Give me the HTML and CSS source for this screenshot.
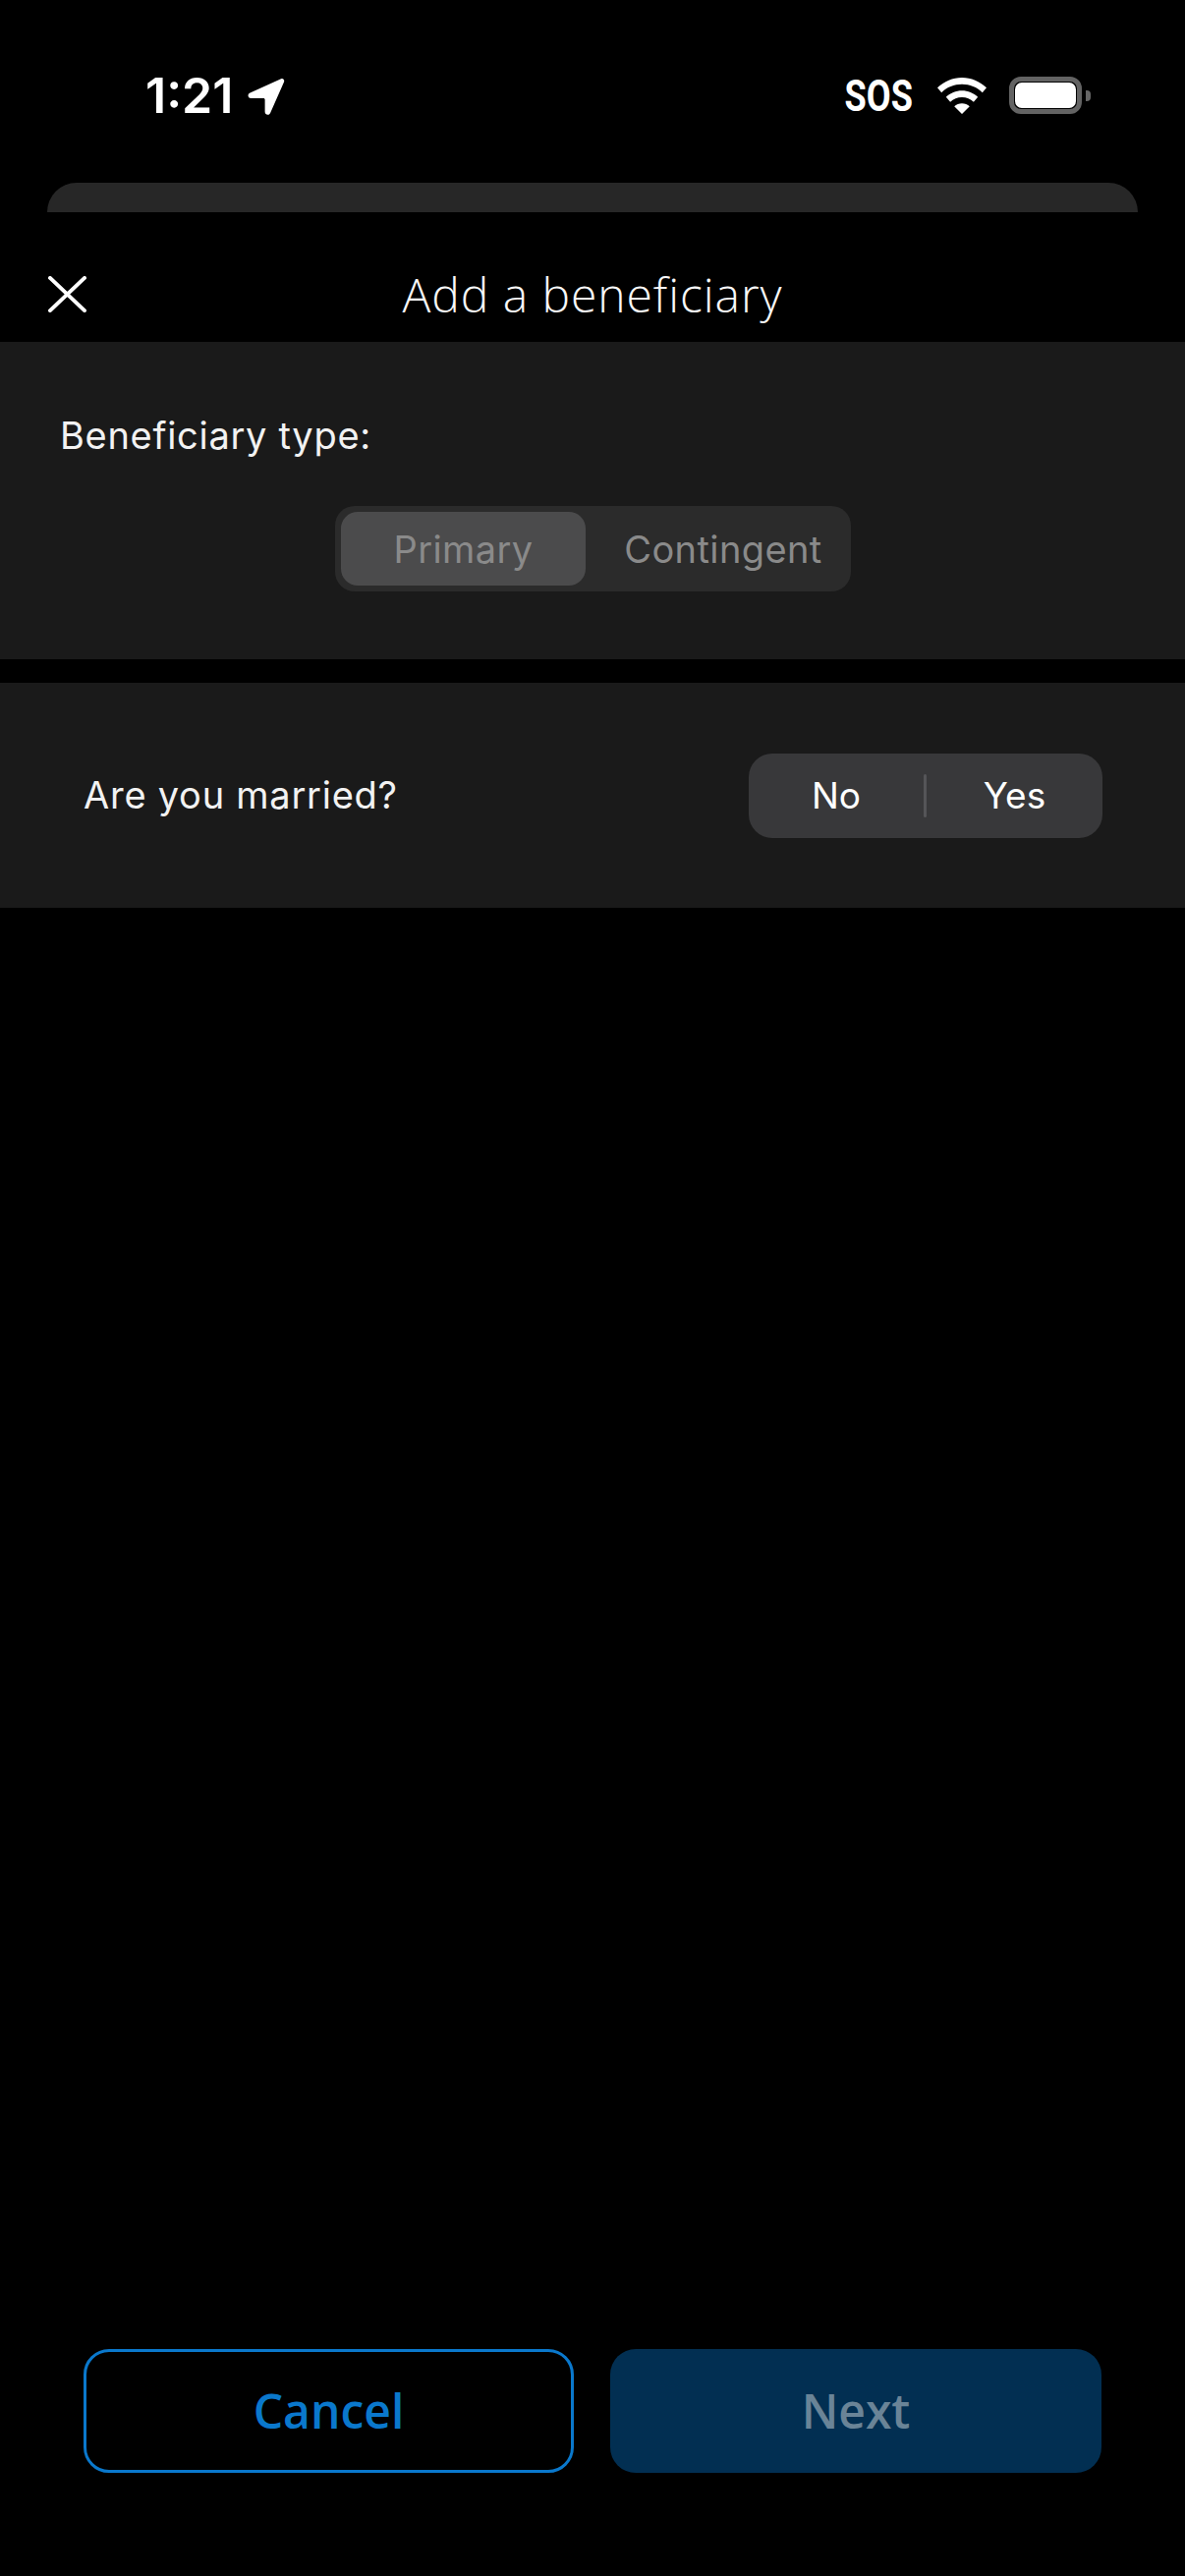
FILE: index.html
```html
<!DOCTYPE html>
<html lang="en">
<head>
<meta charset="utf-8">
<title>Add a beneficiary</title>
<link rel="stylesheet" href="styles.css">
</head>
<body>
<div class="screen">
  <div class="status">
    <div class="status-left">
      <span class="time">1:21</span>
      <svg class="loc" viewBox="0 0 39 39"><path d="M35 1.2 3.500 15.600c-3.200 1.500-2.200 5.500 1 5.500h12.600c.9 0 1.500.6 1.500 1.500v12.200c0 3.400 4.200 4.200 5.500 1.200L38 4.500c.9-2.200-.9-4.200-3-3.300Z" fill="#fff"/></svg>
    </div>
    <div class="status-right">
      <span class="sos"><span class="sos-text">SOS</span></span>
      <svg class="wifi" viewBox="0 0 50 37"><path d="M25 0C15.500 0 7 3.800 0 10.200l4.200 5C9.800 9.800 17 6.800 25 6.800s15.200 3 20.800 8.400l4.200-5C43 3.800 34.500 0 25 0Z M25 13.200c-6.200 0-11.800 2.500-16.200 6.500l4.300 5c3.200-3 7.300-4.700 11.900-4.700s8.700 1.700 11.900 4.700l4.300-5c-4.400-4-10-6.500-16.200-6.500Z M25 26.200c-3 0-5.700 1.200-7.800 3.100L25 37l7.800-7.700c-2.100-1.900-4.800-3.100-7.800-3.100Z" fill="#fff"/></svg>
      <span class="battery"><span class="battery-level"></span></span>
      <span class="battery-cap"></span>
    </div>
  </div>
  <div class="peek"></div>
  <header class="header">
    <svg class="close" viewBox="0 0 40 38"><path d="M2 2 38 36M38 2 2 36" stroke="#fff" stroke-width="4" stroke-linecap="round" fill="none"/></svg>
    <h1 class="title">Add a beneficiary</h1>
  </header>
  <section class="panel panel-type">
    <p class="label">Beneficiary type:</p>
    <div class="segment">
      <span class="seg-item seg-active">Primary</span>
      <span class="seg-item seg-plain">Contingent</span>
    </div>
  </section>
  <section class="panel panel-married">
    <p class="question">Are you married?</p>
    <div class="choice">
      <span class="choice-item">No</span>
      <span class="choice-divider"></span>
      <span class="choice-item">Yes</span>
    </div>
  </section>
  <div class="spacer"></div>
  <footer class="footer">
    <button class="btn btn-cancel">Cancel</button>
    <button class="btn btn-next">Next</button>
  </footer>
</div>
</body>
</html>
```
FILE: styles.css
```css
* { box-sizing: border-box; }
html, body { margin: 0; padding: 0; background: #000; }
.screen { width: 1206px; height: 2622px; display: flex; flex-direction: column; background: #000; color: #fff; overflow: hidden; }

.status { height: 186px; display: flex; justify-content: space-between; align-items: flex-start; padding: 0 96px 0 148px; }
.status-left { display: flex; align-items: flex-start; padding-top: 79px; gap: 14px; }
.time { font: 600 50px/37px Inter, sans-serif; }
.loc { width: 39px; height: 39px; display: block; }
.status-right { display: flex; align-items: flex-start; padding-top: 78px; }
.sos { width: 66px; height: 38px; margin-right: 27px; display: flex; justify-content: center; }
.sos-text { font: 700 44px/40px Roboto, sans-serif; transform: scaleX(.82); }
.wifi { width: 50px; height: 37px; margin-top: 1px; margin-right: 23px; display: block; }
.battery { width: 74px; height: 38px; border: 5px solid #636363; border-radius: 12px; display: block; }
.battery-level { display: block; margin: 1px; height: 26px; width: 62px; background: #fff; border-radius: 7px; }
.battery-cap { width: 5px; height: 11px; margin: 14px 0 0 4px; background: #666; border-radius: 0 4px 4px 0; }

.peek { height: 30px; margin: 0 48px; background: #272727; border-radius: 30px 30px 0 0; }

.header { height: 132px; display: flex; align-items: center; justify-content: center; position: relative; padding-top: 36px; }
.close { position: absolute; left: 49px; top: 65px; width: 39px; height: 37px; }
.title { margin: 0; font: 300 48px/60px "Open Sans", sans-serif; color: #f8f8f8; letter-spacing: .95px; }

.panel { background: #1a1a1a; }
.panel-type { height: 323px; padding: 69px 0 0 61px; margin-bottom: 24px; }
.label { margin: 0; font: 400 38px/52px Inter, sans-serif; color: #f2f2f2; letter-spacing: .7px; }
.segment { display: flex; align-items: center; width: 525px; height: 87px; margin: 46px 0 0 280px; padding: 0 6px; background: #2b2b2b; border-radius: 20px; }
.seg-item { font: 400 38px/52px Inter, sans-serif; color: #8a8a8a; display: flex; align-items: center; justify-content: center; letter-spacing: .4px; }
.seg-active { width: 249px; height: 75px; background: #4b4b4c; border-radius: 17px; }
.seg-plain { flex: 1; padding-left: 16px; }

.panel-married { height: 229px; display: flex; align-items: center; justify-content: space-between; padding: 1px 84px 0 85px; }
.question { margin: 0 0 3px; font: 400 38px/52px Inter, sans-serif; color: #f2f2f2; letter-spacing: .75px; }
.choice { width: 360px; height: 86px; display: grid; grid-template-columns: 178px 3px 1fr; align-items: center; background: #38383a; border-radius: 24px; }
.choice-item { text-align: center; font: 400 37px/52px Inter, sans-serif; color: #fff; }
.choice-divider { height: 44px; background: #555558; border-radius: 2px; }

.spacer { flex: 1; }
.footer { display: grid; grid-template-columns: 499px 500px; gap: 37px; padding: 0 0 105px 85px; }
.btn { height: 126px; border-radius: 26px; font: 600 48px/60px "Open Sans", sans-serif; padding: 0; }
.btn-cancel { background: #000; border: 3px solid #0a78cc; color: #0a78cc; }
.btn-next { background: #022f52; border: 0; color: #6a8497; }
```
